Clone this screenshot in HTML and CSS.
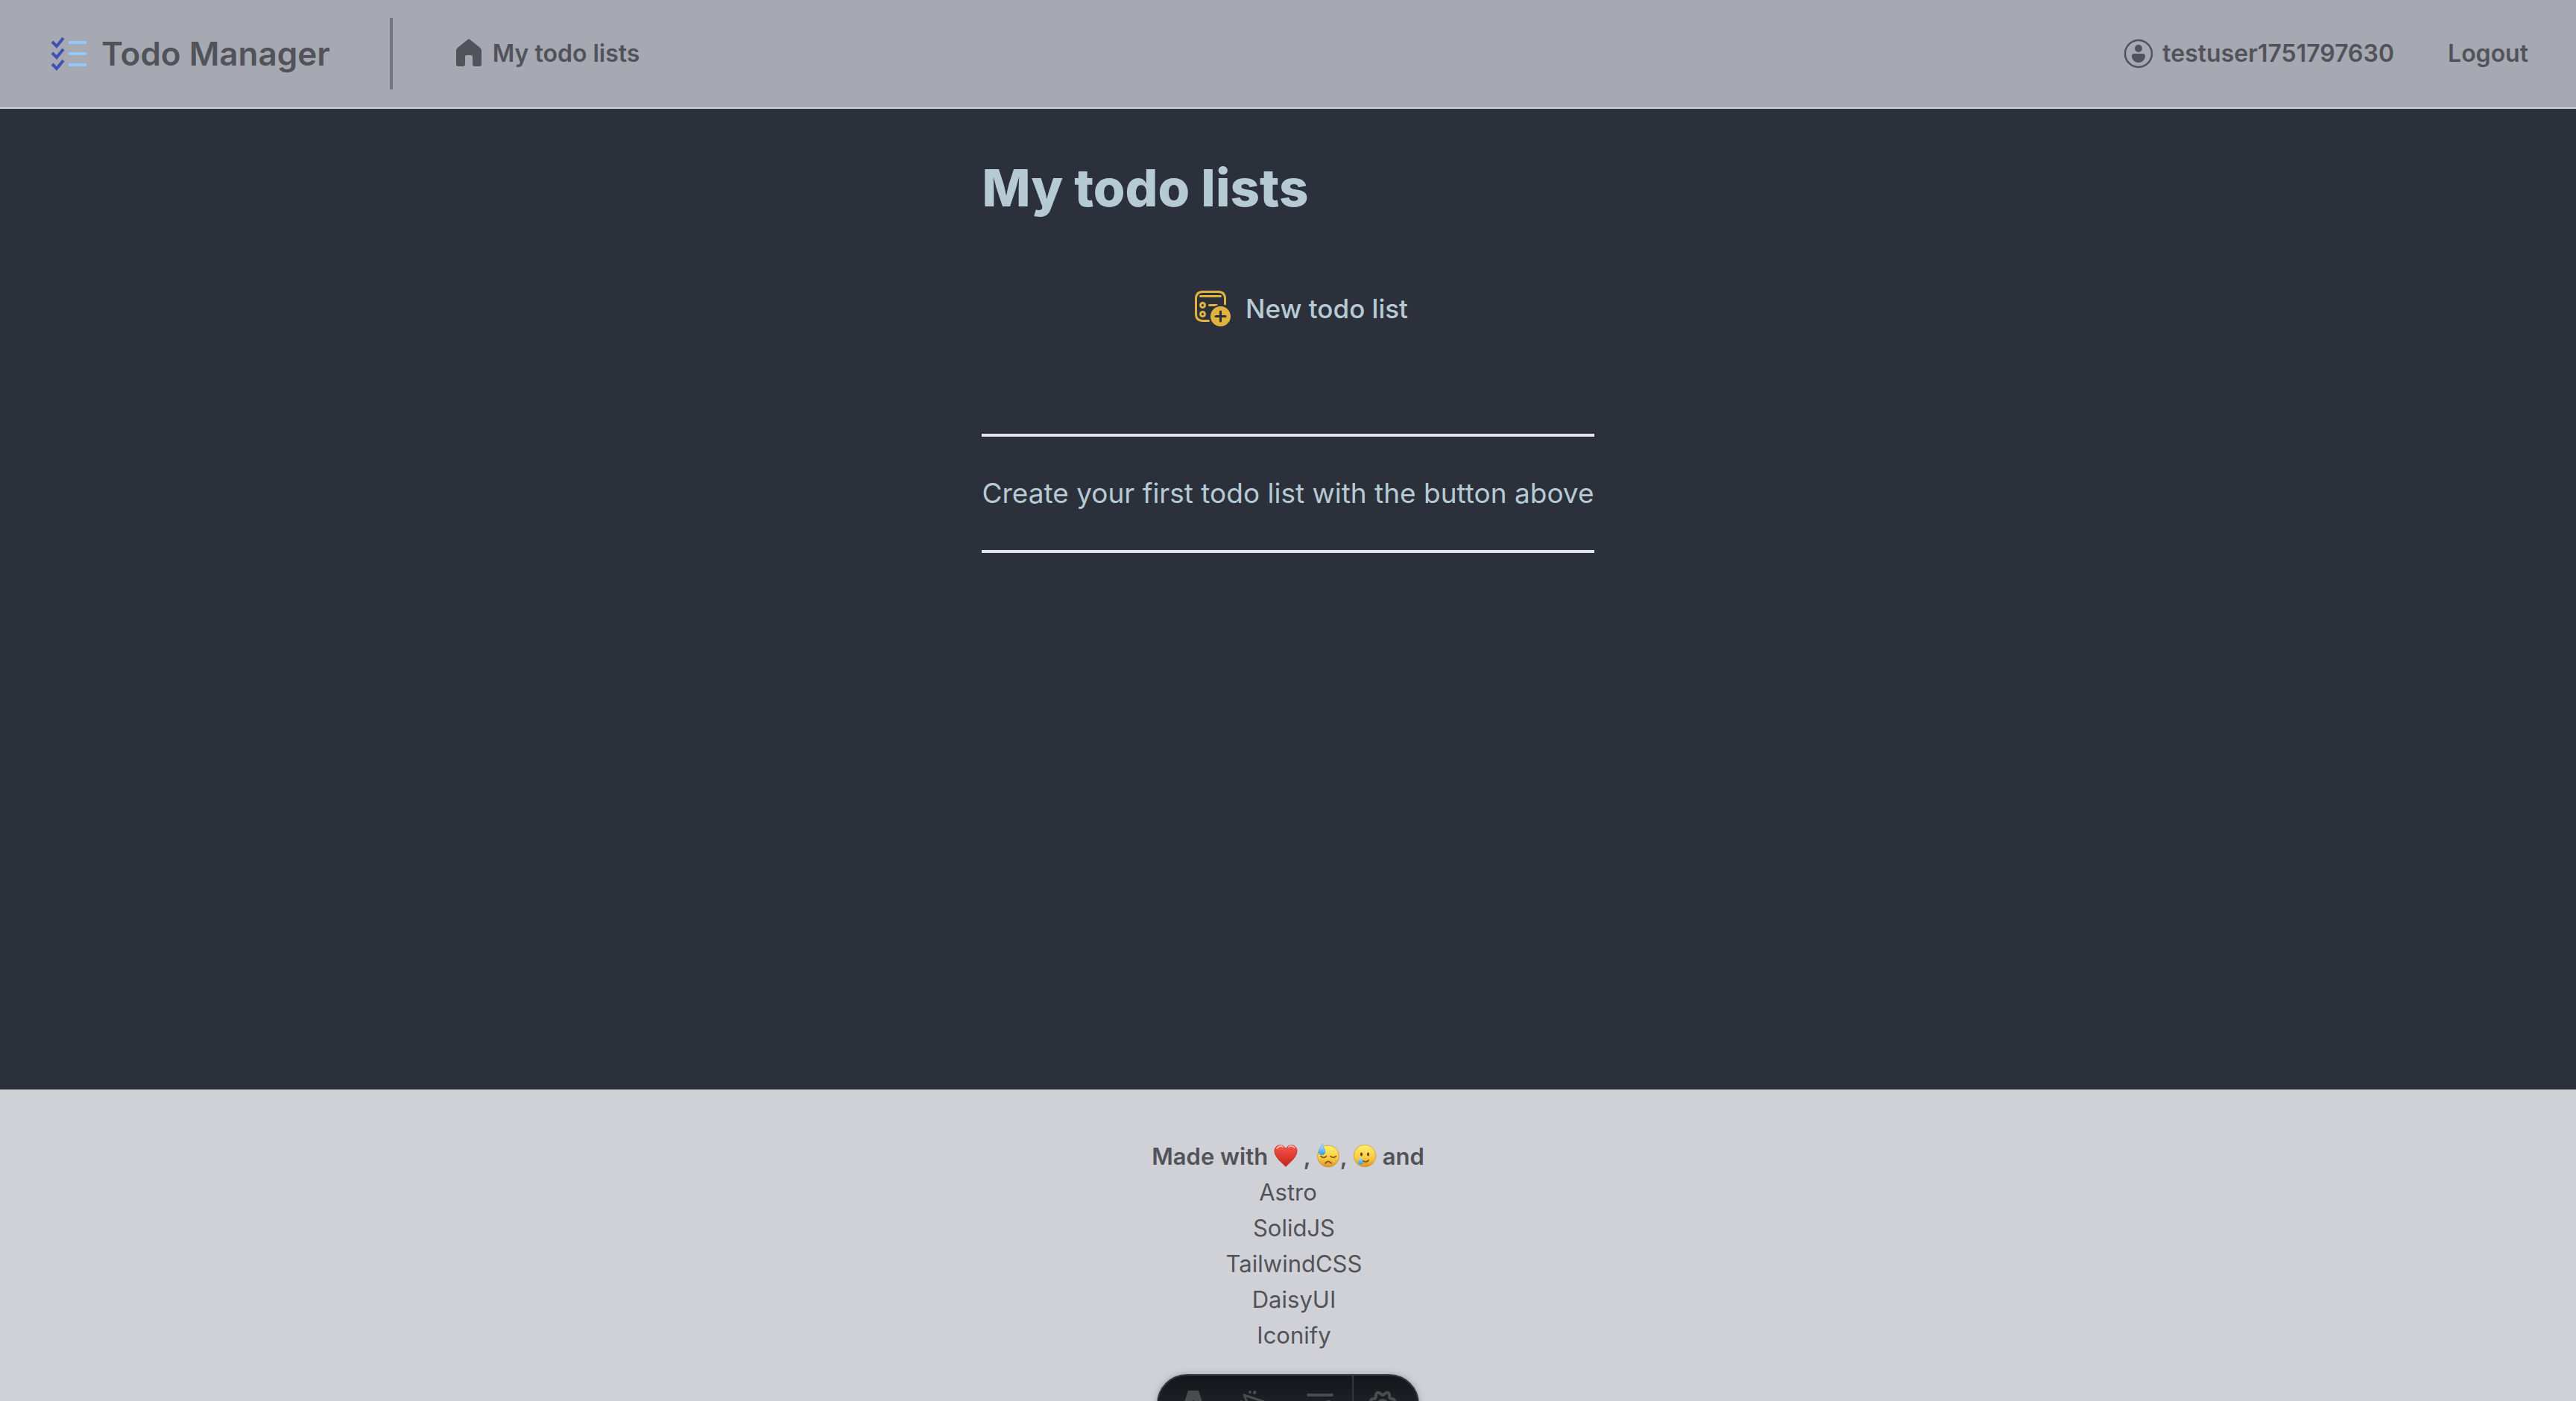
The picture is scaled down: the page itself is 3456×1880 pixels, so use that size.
FILE: index.html
```html
<!DOCTYPE html>
<html lang="en">
<head>
<meta charset="utf-8">
<title>My todo lists</title>
<link rel="stylesheet" href="styles.css">
</head>
<body>
<header class="navbar">
  <a class="brand" href="#">
    <svg class="icon" viewBox="0 0 48 48" aria-hidden="true">
      <g fill="#90caf9"><path d="M24 7h24v4H24zM24 22h24v4H24zM24 37h24v4H24z"/></g>
      <g fill="none" stroke="#3f51b5" stroke-width="4"><path d="M2 8l6 6 9-11M2 23l6 6 9-11M2 38l6 6 9-11"/></g>
    </svg>
    <span>Todo Manager</span>
  </a>
  <nav class="nav-main">
    <a class="nav-link" href="#">
      <svg class="icon-small" viewBox="0 0 40 40" aria-hidden="true"><path fill="currentColor" d="M18 1.400q2-1.600 4 0l13.300 10.800Q37 13.600 37 16v18q0 3-3 3h-6q-3 0-3-3V24q0-2-2-2h-6q-2 0-2 2v10q0 3-3 3H6q-3 0-3-3V16q0-2.400 1.700-3.800z"/></svg>
      <span>My todo lists</span>
    </a>
  </nav>
  <nav class="nav-user">
    <a class="nav-link" href="#">
      <svg class="icon-small" viewBox="0 0 40 40" aria-hidden="true"><circle cx="20" cy="20" r="18" fill="none" stroke="currentColor" stroke-width="2.500"/><circle cx="20" cy="13" r="5" fill="currentColor"/><path fill="currentColor" d="M14 20h12q3 0 3 3c0 5-4 9-9 9s-9-4-9-9q0-3 3-3z"/></svg>
      <span>testuser1751797630</span>
    </a>
    <button class="logout" type="button">Logout</button>
  </nav>
</header>
<main class="content">
  <section class="lists">
    <h1>My todo lists</h1>
    <button class="new-list" type="button">
      <svg class="icon" viewBox="0 0 48 48" aria-hidden="true">
        <g fill="none" stroke="currentColor" stroke-width="3" stroke-linecap="round">
          <path d="M18.500 40.500H11Q1.500 40.500 1.500 31V11Q1.500 1.500 11 1.500h20Q40.500 1.500 40.500 11v7M7.500 7.500h27M19.500 19.500h10"/>
          <circle cx="10.500" cy="19.500" r="3"/><circle cx="10.500" cy="31.500" r="3"/>
        </g>
        <circle cx="34.500" cy="34.500" r="15.500" fill="#2c303b"/><circle cx="34.500" cy="34.500" r="13.500" fill="currentColor"/>
        <path d="M34.500 28v13M28 34.500h13" stroke="#2c303b" stroke-width="3" stroke-linecap="round"/>
      </svg>
      <span>New todo list</span>
    </button>
    <p class="empty">Create your first todo list with the button above</p>
  </section>
</main>
<footer class="footer">
  <p class="made">Made with
    <svg class="emoji" viewBox="0 0 32 32" role="img" aria-label="heart">
      <defs>
        <linearGradient id="red" x2="0" y2="1"><stop stop-color="#f4584b"/><stop offset="1" stop-color="#c8221a"/></linearGradient>
        <linearGradient id="yellow" x2="0" y2="1"><stop stop-color="#fff06a"/><stop offset=".6" stop-color="#fbc942"/><stop offset="1" stop-color="#dd9525"/></linearGradient>
        <linearGradient id="blue" x2="0" y2="1"><stop stop-color="#b8e6ff"/><stop offset="1" stop-color="#2f9cea"/></linearGradient>
      </defs>
      <path d="M16 30.500C11 25 1 18 1 9.500 1 1 12-1.500 16 7c4-8.500 15-6 15 2.500C31 18 21 25 16 30.500z" fill="url(#red)" stroke="#b51f18" stroke-width=".8"/>
      <path d="M4 6q4-5 8-2M20 4q4-3 8 1" fill="none" stroke="#ffc4ba" stroke-width="1.500" stroke-linecap="round"/>
    </svg>
    , <svg class="emoji" viewBox="0 0 32 32" role="img" aria-label="downcast face with sweat">
      <circle cx="16" cy="16.500" r="14.500" fill="url(#yellow)" stroke="#c98b28" stroke-width=".7"/>
      <path d="M6 16.500q3.500 3.500 7.500 0M19 16.500q4 3.500 7.500 0M12 26q4-5 8 0" fill="none" stroke="#6f4510" stroke-width="1.600" stroke-linecap="round"/>
      <path d="M8 0C6 4 3 7 3 10.500a4.500 4.500 0 0 0 9 0C12 7 9 4 8 0z" fill="url(#blue)" stroke="#4d9fd8" stroke-width=".5"/>
    </svg>, <svg class="emoji" viewBox="0 0 32 32" role="img" aria-label="smiling face with tear">
      <circle cx="16" cy="16" r="14.800" fill="url(#yellow)" stroke="#c98b28" stroke-width=".7"/>
      <g fill="#6f4510"><ellipse cx="11.500" cy="14" rx="1.600" ry="2.400"/><ellipse cx="20.500" cy="14" rx="1.600" ry="2.400"/></g>
      <path d="M12 22q6 4 9 0" fill="none" stroke="#6f4510" stroke-width="1.600" stroke-linecap="round"/>
      <path d="M10.500 17C9 20 7 22 7 25a3.600 3.600 0 0 0 7 0c0-3-2.500-5-3.500-8z" fill="url(#blue)"/>
    </svg> and</p>
  <a href="#">Astro</a>
  <ul class="tools">
    <li><a href="#">SolidJS</a></li>
    <li><a href="#">TailwindCSS</a></li>
    <li><a href="#">DaisyUI</a></li>
    <li><a href="#">Iconify</a></li>
  </ul>
</footer>
<div class="devbar" role="toolbar" aria-label="Developer tools">
  <button class="menu" type="button" aria-label="Menu"><svg viewBox="0 0 40 40" aria-hidden="true"><path fill="currentColor" d="M14 0h12q1 0 1.500 1.500L38 34l-11-2-5-17q-2-4-4 0l-5 17-11 2L12.500 1.500Q13 0 14 0z"/></svg></button>
  <button type="button" aria-label="Inspect"><svg viewBox="0 0 40 40" aria-hidden="true"><path fill="none" stroke="currentColor" stroke-width="3" stroke-linecap="round" stroke-linejoin="round" d="M5 6l30 10-12 6-6 12z"/><path fill="none" stroke="currentColor" stroke-width="4" stroke-linecap="round" d="M13 2h.01M19 3l.500-1M1 15h.01"/></svg></button>
  <button type="button" aria-label="Audit"><svg viewBox="0 0 40 40" aria-hidden="true"><path fill="none" stroke="currentColor" stroke-width="4" stroke-linecap="round" d="M4 6h32M4 18h12M4 30h12"/><circle cx="31" cy="21" r="6" fill="none" stroke="currentColor" stroke-width="4"/></svg></button>
  <button class="settings" type="button" aria-label="Settings"><svg viewBox="0 0 40 40" aria-hidden="true"><path fill="none" stroke="currentColor" stroke-width="4" stroke-linejoin="round" d="M4 16q-1-5 4-5 3 0 3-4 0-5 4-4 2 1 3 2 2 2 4 0 1-1 3-2 4-1 4 4 0 4 3 4 5 0 4 5-3 4 0 8 1 5-4 5-3 0-3 4 0 5-4 4-5-3-10 0-4 1-4-4 0-4-3-4-5 0-4-5 3-4 0-8z"/><circle cx="20" cy="20" r="7" fill="none" stroke="currentColor" stroke-width="4"/></svg></button>
</div>
</body>
</html>
```
FILE: styles.css
```css
* { box-sizing: border-box; }
body {
  margin: 0;
  height: 100vh;
  overflow: hidden;
  display: flex;
  flex-direction: column;
  background: #2c303b;
  color: #52535a;
  font-family: Inter, "Liberation Sans", sans-serif;
  font-size: 31px;
  line-height: 48px;
}
a { color: inherit; text-decoration: none; }
button { padding: 0; border: 0; background: none; color: inherit; font: inherit; cursor: pointer; }
h1, p, ul { margin: 0; padding: 0; }
svg { display: block; flex: none; }
.icon { width: 48px; height: 48px; }
.icon-small { width: 40px; height: 40px; }

.navbar {
  display: flex;
  align-items: center;
  padding: 24px 64px 24px 68px;
  background: #a6a9b1;
  border-bottom: 2px solid #d0d4da;
  font-size: 32px;
  font-weight: 600;
}
.brand { display: flex; align-items: center; gap: 20px; font-size: 44px; }
.nav-main {
  display: flex;
  align-items: center;
  height: 96px;
  margin-left: 80px;
  padding-left: 82px;
  border-left: 4px solid #6f7782;
}
.nav-link { display: flex; align-items: center; gap: 12px; }
.nav-user { display: flex; align-items: center; gap: 72px; margin-left: auto; }

.content { flex: 1; display: flex; justify-content: center; padding-top: 66px; color: #b6cad4; }
.lists { display: flex; flex-direction: column; align-items: center; }
h1 { align-self: flex-start; font-size: 69px; line-height: 80px; font-weight: 800; }
.new-list {
  display: flex;
  align-items: center;
  gap: 20px;
  height: 96px;
  margin-top: 74px;
  padding-left: 36px;
  font-size: 35px;
  font-weight: 500;
}
.new-list svg { color: #e0b33f; }
.empty {
  margin-top: 120px;
  padding: 48px 0;
  border-top: 4px solid #e5e6ea;
  border-bottom: 4px solid #e5e6ea;
  font-size: 37px;
  line-height: 56px;
}

.footer {
  display: flex;
  flex-direction: column;
  align-items: center;
  padding: 66px 0 64px;
  background: #d0d1d6;
}
.made { font-weight: 600; }
.emoji { display: inline-block; width: 32px; height: 32px; vertical-align: -4px; }
.tools { padding-left: 16px; list-style: none; text-align: center; }

.devbar {
  position: fixed;
  bottom: -44px;
  left: 50%;
  display: grid;
  grid-template-columns: repeat(3, 1fr) 88px;
  width: 352px;
  height: 80px;
  transform: translateX(-50%);
  overflow: hidden;
  border: 2px solid #343841;
  border-radius: 40px;
  background: linear-gradient(#13151a, #2b2d33);
  box-shadow: 0 0 8px #00000040;
  color: #4b4c50;
}
.devbar button { display: flex; padding-top: 20px; justify-content: center; }
.devbar svg { width: 40px; height: 40px; }
.devbar .menu { padding-left: 8px; }
.devbar .settings { padding-right: 8px; border-left: 2px solid #343841; }
```
